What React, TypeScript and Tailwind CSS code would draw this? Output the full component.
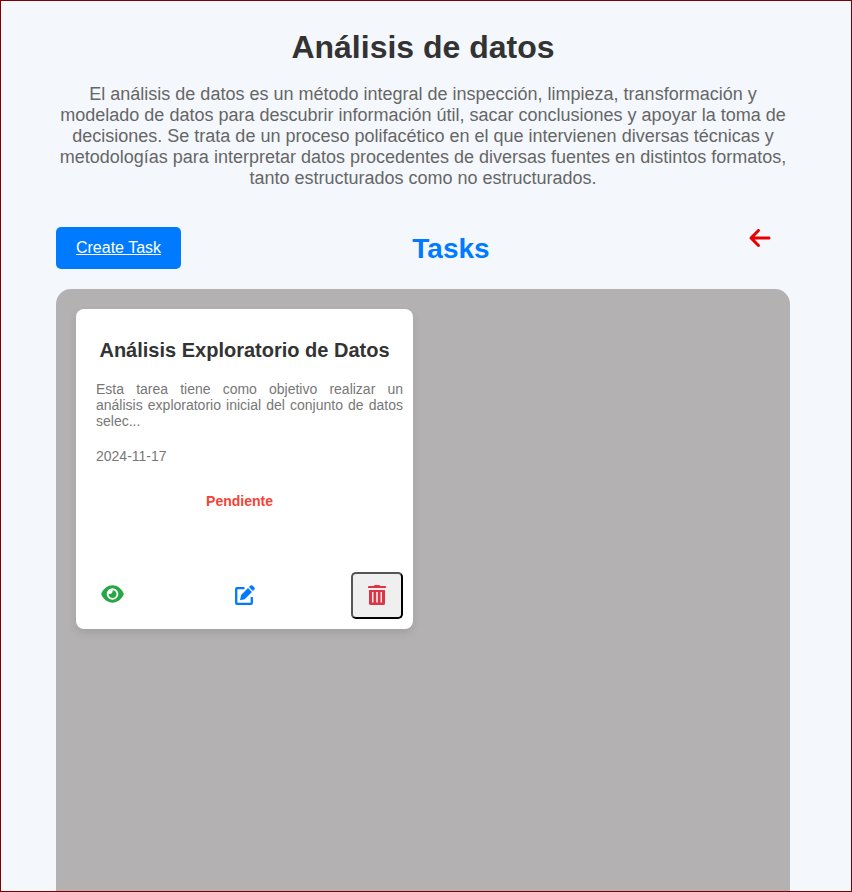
import { FaArrowLeft } from "react-icons/fa6";

function EyeIcon() {
  return (
    <svg viewBox="0 0 23 18" className="h-[18px] w-[23px]" aria-hidden="true">
      <path d="M.4 8.2C2.6 3.6 6.6.3 11.5.3S20.4 3.6 22.6 8.2Q22.9 9 22.6 9.8C20.4 14.4 16.4 17.7 11.5 17.7S2.6 14.4.4 9.8Q.1 9 .4 8.2Z" fill="currentColor" />
      <circle cx="11.5" cy="9" r="5.8" fill="white" />
      <path d="M11.5 5.2A3.9 3.9 0 1 1 7.7 8.9C9.8 9.5 12.2 7.5 11.5 5.2Z" fill="currentColor" />
    </svg>
  );
}

function EditIcon() {
  return (
    <svg viewBox="0 0 20 20" className="h-5 w-5" fill="none" aria-hidden="true">
      <path d="M9.5 3.1H2.1Q1.2 3.1 1.2 4V18q0 .8.8.8H16q.8 0 .8-.8V12" stroke="currentColor" strokeWidth="2.3" />
      <path d="M13 3 17 7 9.7 14.3 5 15.3 6.1 10.1ZM14 2.1 15.5.6Q16.5-.2 17.4.6L19.4 2.6Q20.3 3.5 19.4 4.5L17.9 6Z" fill="currentColor" />
    </svg>
  );
}

function TrashIcon() {
  return (
    <svg viewBox="0 0 18 20" className="h-5 w-[18px]" fill="currentColor" aria-hidden="true">
      <path fillRule="evenodd" d="M0 1.8Q0 1 1 1H5.5L6.4.2Q6.7 0 7.2 0h3.6q.5 0 .8.2L12.5 1H17q1 0 1 .8V3H0ZM1 5H17V18.5q0 1.5-1.5 1.5H2.5Q1 20 1 18.5ZM4 7V17.5H5.5V7ZM8.2 7V17.5H9.8V7ZM12.5 7V17.5H14V7Z" />
    </svg>
  );
}

export default function App() {
  return (
    <div className="h-[892px] overflow-hidden border border-[#800000] bg-[#f4f8fd] px-[55px] pt-[26px] font-['Liberation_Sans',Arial,sans-serif]">
      <div className="w-[734px]">
        <h1 className="text-center text-[32px] leading-[40px] font-bold text-[#333]">Análisis de datos</h1>
        <p className="mt-[17px] text-center text-[18px] leading-[21px] text-[#666]">
          El análisis de datos es un método integral de inspección, limpieza, transformación y modelado de datos para descubrir información útil, sacar conclusiones y apoyar la toma de decisiones. Se trata de un proceso polifacético en el que intervienen diversas técnicas y metodologías para interpretar datos procedentes de diversas fuentes en distintos formatos, tanto estructurados como no estructurados.
        </p>
        <div className="mt-[38px] flex h-[42px] items-start justify-between">
          <a href="#" className="flex h-[42px] w-[125px] items-center justify-center rounded-[5px] bg-[#007bff] text-[16px] text-white underline">Create Task</a>
          <h2 className="-ml-[27px] pt-px text-[28px] leading-[42px] font-bold text-[#007bff]">Tasks</h2>
          <a href="#" className="-mt-px mr-[18px] text-[24px] text-[#e60000]"><FaArrowLeft /></a>
        </div>
        <main className="mt-5 h-[640px] rounded-t-[15px] bg-[#b3b1b2] p-5">
          <article className="flex h-[320px] w-[337px] flex-col rounded-[8px] bg-white pt-[30px] pr-2.5 pb-2.5 pl-5 shadow-[0_4px_8px_rgba(0,0,0,0.1)]">
            <h3 className="mr-2.5 text-center text-[20px] leading-[23px] font-bold whitespace-nowrap text-[#333]">Análisis Exploratorio de Datos</h3>
            <p className="mt-[19px] text-justify text-[14px] leading-[16px] text-[#777]">Esta tarea tiene como objetivo realizar un análisis exploratorio inicial del conjunto de datos selec...</p>
            <p className="mt-[19px] text-[14px] leading-[16px] text-[#777]">2024-11-17</p>
            <p className="mt-[29px] mr-5 text-center text-[14px] leading-[16px] font-bold text-[#f44336]">Pendiente</p>
            <div className="mt-auto flex h-[47px] items-start justify-between pl-[5px]">
              <a href="#" aria-label="Ver" className="pt-[13px] text-[#28a745]"><EyeIcon /></a>
              <a href="#" aria-label="Editar" className="ml-[14px] pt-[12.5px] text-[#007bff]"><EditIcon /></a>
              <button aria-label="Eliminar" className="flex h-[47px] w-[52px] items-start justify-center rounded-[5px] border-2 border-t-[#555] border-r-black border-b-black border-l-[#555] bg-[#efefef] pt-[10.5px] text-[#dc3545]"><TrashIcon /></button>
            </div>
          </article>
        </main>
      </div>
    </div>
  );
}
